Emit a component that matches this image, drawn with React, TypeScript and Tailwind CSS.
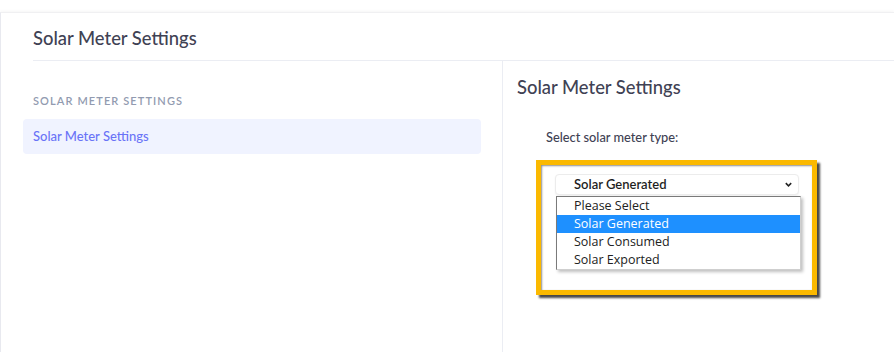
import React from "react";

export default function App() {
  const options = ["Please Select", "Solar Generated", "Solar Consumed", "Solar Exported"];
  return (
    <div className="w-[894px] h-[352px] bg-white overflow-hidden font-['Lato',sans-serif]">
      <div className="h-3 bg-white" />
      <div className="h-[340px] border-l border-l-[#e8e9ef] border-t border-t-[#f0f0f2] shadow-[0_-1px_3px_rgba(0,0,0,0.04)]">
        <div className="ml-[32px] h-[48px] border-b border-b-[#ebedf3] flex items-center pt-[3px]">
          <h1 className="text-[18.4px] leading-6 text-[#3f4254] font-medium">Solar Meter Settings</h1>
        </div>
        <div className="flex h-[291px]">
          <div className="w-[502px] border-r border-r-[#ebedf3] pl-[22px] pr-[21px] pt-[32px]">
            <div className="pl-[10px] text-[11px] leading-4 tracking-[1.1px] font-semibold text-[#929bb0] uppercase">
              Solar Meter Settings
            </div>
            <div className="mt-[10px] h-[35px] rounded bg-[#f0f3ff] flex items-center pl-[10px] text-[13px] font-medium text-[#6a74f7]">
              Solar Meter Settings
            </div>
          </div>
          <div className="flex-1 pl-[14px] pt-[14px]">
            <h2 className="text-[18.4px] leading-6 text-[#3f4254] font-medium">Solar Meter Settings</h2>
            <div className="ml-[29px] mt-[29px] text-[12.8px] leading-[18px] font-medium text-[#3f4254]">
              Select solar meter type:
            </div>
            <div className="relative ml-[19px] mt-[14px] w-[281px] h-[135px] border-[5px] border-[#fbb900] bg-white shadow-[3px_3px_2px_rgba(40,40,40,0.85),inset_1px_1px_2px_rgba(0,0,0,0.45)]">
              <div className="absolute left-[14px] top-[9px] w-[244px] h-[21px] bg-white border border-[#ececec] rounded-sm shadow-[0_1px_2px_rgba(0,0,0,0.06)] flex items-center justify-between pl-[18px] pr-[5px]">
                <span className="text-[13px] font-semibold text-[#1f1f1f] font-['Lato',sans-serif]">Solar Generated</span>
                <svg width="9" height="9" viewBox="0 0 10 10">
                  <path d="M2 3.5 L5 6.5 L8 3.5" fill="none" stroke="#222" strokeWidth="1.7" />
                </svg>
              </div>
              <div className="absolute left-[15px] top-[31px] w-[245px] border border-[#7a7a7a] border-b-[#cfcfcf] border-r-[#cfcfcf] bg-white shadow-[2px_2px_3px_rgba(0,0,0,0.25)]">
                {options.map((o, i) => (
                  <div
                    key={o}
                    className={
                      i === 1
                        ? "h-[18px] pl-[17px] flex items-center text-[12.5px] font-['Open_Sans',sans-serif] bg-[#1e90ff] text-white"
                        : "h-[18px] pl-[17px] flex items-center text-[12.5px] font-['Open_Sans',sans-serif] text-[#222]"
                    }
                  >
                    {o}
                  </div>
                ))}
              </div>
            </div>
          </div>
        </div>
      </div>
    </div>
  );
}
